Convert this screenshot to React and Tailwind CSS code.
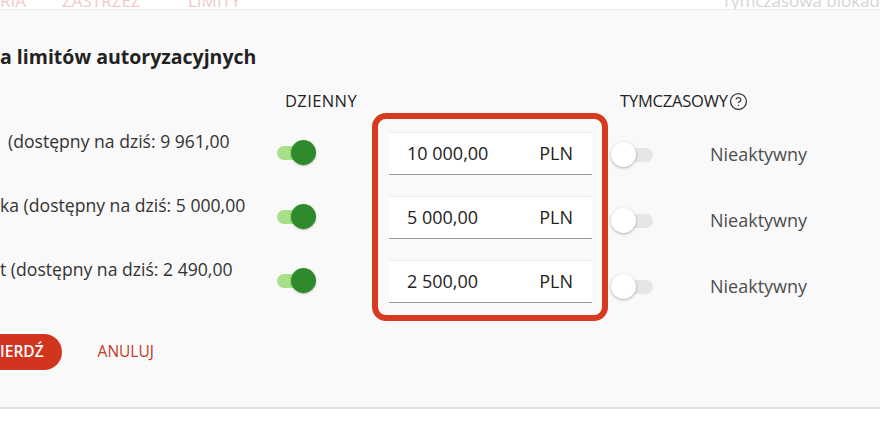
import { CircleHelp } from 'lucide-react';

const rows = [
  { label: '(dostępny na dziś: 9 961,00', indent: 'pl-[8px]', amount: '10 000,00' },
  { label: 'ka (dostępny na dziś: 5 000,00', indent: 'pl-0', amount: '5 000,00' },
  { label: 't (dostępny na dziś: 2 490,00', indent: 'pl-0', amount: '2 500,00' },
];

function Toggle({ on }) {
  if (on) {
    return (
      <div className="relative w-[39px] h-[25px]">
        <div className="absolute left-0 top-[6px] w-[28px] h-[14px] rounded-full bg-[#a9df8b]" />
        <div className="absolute right-0 top-0 w-[25px] h-[25px] rounded-full bg-[#2f8a2b] shadow-[0_1px_2px_rgba(0,0,0,0.25)]" />
      </div>
    );
  }
  return (
    <div className="relative w-[42px] h-[25px]">
      <div className="absolute right-0 top-[6px] w-[33px] h-[14px] rounded-full bg-[#e6e6e6]" />
      <div className="absolute left-0 top-0 w-[25px] h-[25px] rounded-full bg-white shadow-[0_1px_3px_rgba(0,0,0,0.3)]" />
    </div>
  );
}

export default function App() {
  return (
    <div className="w-[880px] h-[423px] overflow-hidden bg-white font-['Open_Sans',sans-serif]">
      {/* tabs strip, mostly scrolled out of view */}
      <div className="h-[10px] overflow-hidden border-b border-[#ececec] flex text-[17px] leading-none">
        <div className="flex -mt-[8px] text-[#f2c9c9]">
          <span className="w-[62px]">RIA</span>
          <span className="w-[126px]">ZASTRZEŻ</span>
          <span>LIMITY</span>
        </div>
        <span className="ml-auto -mt-[8px] text-[#d4d4d4] whitespace-nowrap">Tymczasowa blokad</span>
      </div>

      <div className="h-[399px] bg-[#f9f9f9] border-b-2 border-[#e1e1e1]">
        <h2 className="pt-[33px] text-[19.5px] leading-7 font-bold text-[#222]">a limitów autoryzacyjnych</h2>

        <div className="flex mt-[18px] text-[16.5px] leading-6 text-[#222]">
          <span className="ml-[285px] w-[335px] tracking-[0.4px]">DZIENNY</span>
          <span className="flex items-center tracking-[-0.2px]">
            TYMCZASOWY
            <CircleHelp size={19} strokeWidth={1.6} className="ml-[1px] text-[#333]" />
          </span>
        </div>

        <div className="flex">
          <div className="w-[277px] pt-[16px] flex flex-col gap-[40px] text-[17.6px] leading-6 text-[#333] whitespace-nowrap">
            {rows.map((r) => (
              <div key={r.amount} className={r.indent}>{r.label}</div>
            ))}
          </div>

          <div className="w-[95px] pt-[27px] flex flex-col gap-[39px]">
            {rows.map((r) => (
              <Toggle key={r.amount} on />
            ))}
          </div>

          <div className="w-[236px] h-[208px] border-[6px] border-[#d63b21] rounded-[14px] pl-[11px] pr-[10px] pt-[13px] flex flex-col gap-[21px]">
            {rows.map((r) => (
              <div key={r.amount} className="h-[43px] bg-white border-t border-[#eee] border-b border-b-[#9a9a9a] flex items-center justify-between pl-[18px] pr-[19px] text-[18px] text-[#222]">
                <span>{r.amount}</span>
                <span>PLN</span>
              </div>
            ))}
          </div>

          <div className="ml-[3px] pt-[28px] flex flex-col gap-[39px]">
            {rows.map((r) => (
              <div key={r.amount} className="flex items-center">
                <Toggle on={false} />
                <span className="ml-[57px] text-[18px] text-[#4d4d4d]">Nieaktywny</span>
              </div>
            ))}
          </div>
        </div>

        <div className="flex items-center mt-[13px]">
          <button className="-ml-[20px] pl-[20px] pr-[18px] h-[36px] rounded-full bg-[#d2351f] text-white text-[15.5px] font-semibold">
            IERDŹ
          </button>
          <button className="ml-[36px] text-[15.5px] text-[#c0392b]">ANULUJ</button>
        </div>
      </div>
    </div>
  );
}
